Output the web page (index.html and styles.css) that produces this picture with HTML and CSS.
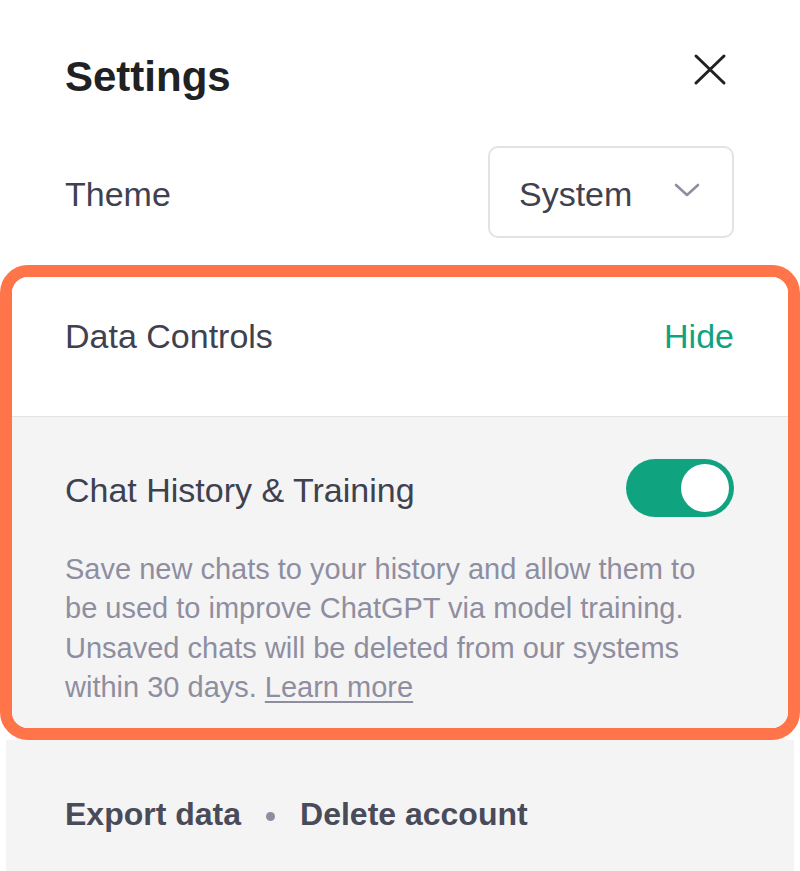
FILE: index.html
```html
<!DOCTYPE html>
<html lang="en">
<head>
<meta charset="UTF-8">
<meta name="viewport" content="width=device-width, initial-scale=1.0">
<title>Settings</title>
<link rel="stylesheet" href="styles.css">
</head>
<body>
<div class="panel">
  <div class="header">
    <h1>Settings</h1>
    <button class="close" aria-label="Close">
      <svg width="34" height="34" viewBox="-2 -2 34 34" fill="none" stroke="#202123" stroke-width="3" stroke-linecap="round">
        <line x1="1" y1="1" x2="29" y2="28"/>
        <line x1="29" y1="1" x2="1" y2="28"/>
      </svg>
    </button>
  </div>

  <div class="row theme-row">
    <span class="label">Theme</span>
    <div class="select">
      <span>System</span>
      <svg width="26" height="18" viewBox="0 0 26 18" fill="none" stroke="#8e8ea0" stroke-width="2.6" stroke-linecap="round" stroke-linejoin="round">
        <polyline points="2,4 13,14 24,4"/>
      </svg>
    </div>
  </div>

  <div class="data-box">
    <div class="data-head">
      <span class="label">Data Controls</span>
      <a class="hide" href="#">Hide</a>
    </div>
    <div class="data-body">
      <div class="row toggle-row">
        <span class="label">Chat History &amp; Training</span>
        <div class="toggle"><div class="knob"></div></div>
      </div>
      <p class="note">Save new chats to your history and allow them to be used to improve ChatGPT via model training. Unsaved chats will be deleted from our systems within 30 days.<a href="#">Learn more</a></p>
    </div>
  </div>

  <div class="footer">
    <a href="#">Export data</a>
    <span class="dot"></span>
    <a href="#">Delete account</a>
  </div>
</div>
</body>
</html>
```

FILE: styles.css
```css
body {
  margin: 0;
  background-color: white;
  font-family: "Liberation Sans", Arial, sans-serif;
  color: #40414f;
}

.panel {
  margin: 0 6px;
}

.header {
  display: flex;
  justify-content: space-between;
  align-items: flex-start;
  padding: 52px 60px 0 59px;
}

h1 {
  margin: 0;
  font-size: 42px;
  line-height: 50px;
  font-weight: bold;
  color: #202123;
}

.close {
  background: none;
  border: none;
  padding: 0;
  margin: 1px 7px 0 0;
  display: flex;
}

.row {
  display: flex;
  justify-content: space-between;
  align-items: center;
}

.label {
  font-size: 34px;
  line-height: 40px;
}

.theme-row {
  margin-top: 44px;
  padding: 0 60px 0 59px;
}

.theme-row .label {
  margin-top: 4px;
}

.select {
  box-sizing: border-box;
  width: 246px;
  height: 92px;
  border: 2px solid #e3e3e6;
  border-radius: 10px;
  display: flex;
  align-items: center;
  justify-content: space-between;
  padding: 4px 32px 0 29px;
  font-size: 34px;
  color: #40414f;
}

.select svg {
  margin-top: -8px;
}

.data-box {
  margin: 27px -6px 0;
  border: 12px solid #ff7448;
  border-radius: 28px;
  overflow: hidden;
}

.data-head {
  display: flex;
  justify-content: space-between;
  padding: 39px 54px 60px 53px;
  border-bottom: 1px solid #e3e3e3;
  background-color: white;
}

.hide {
  font-size: 34px;
  line-height: 40px;
  color: #10a37f;
  text-decoration: none;
}

.data-body {
  background-color: #f4f4f5;
  padding: 42px 54px 21px 53px;
}

.toggle-row .label {
  margin-top: 3px;
}

.toggle {
  box-sizing: border-box;
  width: 108px;
  height: 58px;
  border-radius: 29px;
  background-color: #10a37f;
  padding: 5px;
  display: flex;
  justify-content: flex-end;
}

.knob {
  width: 48px;
  height: 48px;
  border-radius: 50%;
  background-color: white;
}

.note {
  margin: 33px 0 0;
  font-size: 29px;
  line-height: 39.3px;
  color: #8e8ea0;
}

.note a {
  margin-left: 8px;
  color: #8e8ea0;
  text-decoration-thickness: 2px;
  text-underline-offset: 4px;
}

.footer {
  background-color: #f4f4f5;
  padding: 54px 59px 60px;
  display: flex;
  align-items: center;
  gap: 22px;
}

.footer a {
  font-size: 32px;
  line-height: 40px;
  font-weight: bold;
  color: #4a4b59;
  text-decoration: none;
}

.dot {
  width: 9px;
  height: 9px;
  border-radius: 50%;
  background-color: #8e8ea0;
  margin: 4px 3px 0;
}
```
